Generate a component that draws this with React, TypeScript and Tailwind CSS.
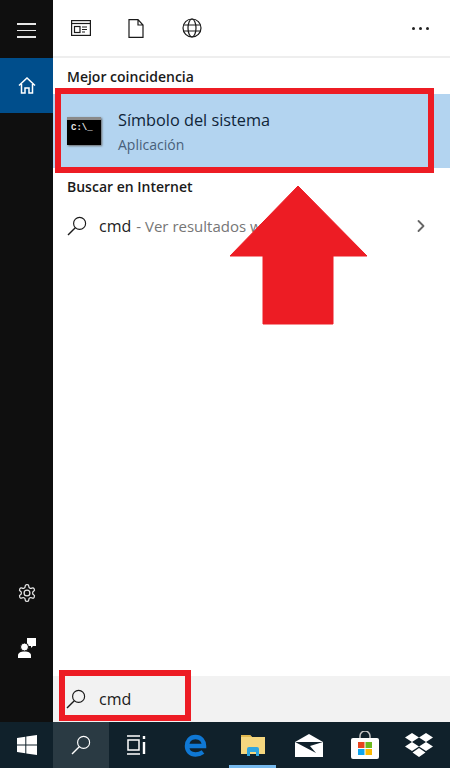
import { ChevronRight } from "lucide-react";

const font = { fontFamily: '"Open Sans", "Noto Sans", sans-serif' };

function SearchIcon({ color = "#1a1a1a", size = 20 }: { color?: string; size?: number }) {
  return (
    <svg width={size} height={size} viewBox="0 0 20 20" fill="none" stroke={color} strokeWidth="1.15">
      <circle cx="12.6" cy="7.4" r="6" />
      <path d="M8.300 11.700 1 19" strokeWidth="1.400" />
    </svg>
  );
}

function Toolbar() {
  return (
    <div className="flex h-[58px] items-center border-b-2 border-[#eeeeee] bg-white">
      <svg className="ml-[18px]" width="20" height="16" viewBox="0 0 20 16" fill="none" stroke="#1a1a1a" strokeWidth="1.2">
        <rect x="0.6" y="0.6" width="18.8" height="14.8" />
        <path d="M1 3.5h18" />
        <rect x="3.5" y="6.5" width="5.5" height="6" />
        <path d="M11 7h5M11 9.5h5M11 12h3" />
      </svg>
      <svg className="ml-[37px]" width="16" height="19" viewBox="0 0 16 19" fill="none" stroke="#1a1a1a" strokeWidth="1.2">
        <path d="M1 .6h9L15 6v12.4H1zM10 .6V6h5" />
      </svg>
      <svg className="ml-[38px]" width="20" height="20" viewBox="0 0 20 20" fill="none" stroke="#1a1a1a" strokeWidth="1.2">
        <circle cx="10" cy="10" r="9" />
        <ellipse cx="10" cy="10" rx="4" ry="9" />
        <path d="M1.5 7h17M1.5 13h17" />
      </svg>
      <div className="ml-auto mr-[21px] flex gap-[4px]">
        <span className="h-[3px] w-[3px] rounded-full bg-[#222222]" />
        <span className="h-[3px] w-[3px] rounded-full bg-[#222222]" />
        <span className="h-[3px] w-[3px] rounded-full bg-[#222222]" />
      </div>
    </div>
  );
}

function Sidebar() {
  return (
    <div className="flex w-[53px] shrink-0 flex-col bg-[#0f0f0f]">
      <div className="flex h-[58px] flex-col items-center justify-center gap-[5px] pt-[3px]">
        <span className="h-[1.5px] w-[19px] bg-[#e6e6e6]" />
        <span className="h-[1.5px] w-[19px] bg-[#e6e6e6]" />
        <span className="h-[1.5px] w-[19px] bg-[#e6e6e6]" />
      </div>
      <div className="flex h-[55px] items-center justify-center bg-[#004e8c]">
        <svg width="18" height="17" viewBox="0 0 18 17" fill="none" stroke="#ffffff" strokeWidth="1.500">
          <path d="M1 8.500 9 1l8 7.500M3.500 7v9h3.500v-5h4v5h3.500V7" />
        </svg>
      </div>
      <div className="mt-auto flex flex-col items-center gap-[35px] pb-[64px]">
        <svg width="20" height="20" viewBox="0 0 24 24" fill="none" stroke="#e6e6e6" strokeWidth="1.500">
          <circle cx="12" cy="12" r="3.5" />
          <path d="M12.2 2h-.4a2 2 0 0 0-2 2v.2a2 2 0 0 1-1 1.7l-.4.3a2 2 0 0 1-2 0l-.2-.1a2 2 0 0 0-2.7.7l-.2.4a2 2 0 0 0 .7 2.7l.2.1a2 2 0 0 1 1 1.7v.5a2 2 0 0 1-1 1.8l-.2.1a2 2 0 0 0-.7 2.7l.2.4a2 2 0 0 0 2.7.7l.2-.1a2 2 0 0 1 2 0l.4.3a2 2 0 0 1 1 1.7v.2a2 2 0 0 0 2 2h.4a2 2 0 0 0 2-2v-.2a2 2 0 0 1 1-1.7l.4-.3a2 2 0 0 1 2 0l.2.1a2 2 0 0 0 2.7-.7l.2-.4a2 2 0 0 0-.7-2.7l-.2-.1a2 2 0 0 1-1-1.8v-.5a2 2 0 0 1 1-1.7l.2-.1a2 2 0 0 0 .7-2.7l-.2-.4a2 2 0 0 0-2.7-.7l-.2.1a2 2 0 0 1-2 0l-.4-.3a2 2 0 0 1-1-1.7V4a2 2 0 0 0-2-2z" />
        </svg>
        <svg width="18" height="20" viewBox="0 0 18 20" fill="#ffffff">
          <path d="M9 0h9v8h-3l-2 2V8H9z" />
          <circle cx="6.5" cy="9" r="4" stroke="#0f0f0f" />
          <path d="M0 20v-2.500C0 15 2.500 13.500 6.500 13.500s6.500 1.500 6.500 4V20z" />
        </svg>
      </div>
    </div>
  );
}

function Panel() {
  return (
    <div className="flex min-w-0 flex-1 flex-col bg-white">
      <Toolbar />
      <div className="pl-[14px] pt-[9px] text-[14px] font-semibold leading-[20px] text-[#1a1a1a]">Mejor coincidencia</div>
      <div className="mt-[7px] flex h-[74px] items-center bg-[#b3d4f0]">
        <div className="ml-[14px] h-[28px] w-[34px] border-t-[3px] border-[#8a8a8a] bg-black pl-[4px] pt-[3px] font-mono text-[9px] font-bold leading-[11px] text-[#e6e6e6] shadow-[1px_1px_2px_#666666]">
          C:\_
        </div>
        <div className="ml-[17px]">
          <div className="text-[16.3px] leading-[24px] text-[#0f2438]">Símbolo del sistema</div>
          <div className="mt-[3px] text-[14px] leading-[20px] text-[#48607a]">Aplicación</div>
        </div>
      </div>
      <div className="pl-[14px] pt-[9px] text-[14px] font-semibold leading-[20px] text-[#1a1a1a]">Buscar en Internet</div>
      <div className="mt-[11px] flex h-[36px] items-center pl-[14px] pr-[19px]">
        <SearchIcon />
        <span className="ml-[12px] text-[16px] text-[#222222]">cmd</span>
        <span className="ml-[5px] text-[15px] text-[#767676]">- Ver resultados web</span>
        <ChevronRight className="ml-auto" size={20} color="#666666" strokeWidth={2.200} />
      </div>
      <div className="mt-auto flex h-[46px] items-center bg-[#f2f2f2] pl-[13px]">
        <SearchIcon />
        <span className="ml-[13px] text-[16px] text-[#1a1a1a]">cmd</span>
      </div>
    </div>
  );
}

function Taskbar() {
  return (
    <div className="flex h-[46px] shrink-0 items-center bg-[#10212b]">
      <div className="flex h-full w-[53px] items-center justify-center">
        <svg width="20" height="20" viewBox="0 0 20 20" fill="#ffffff">
          <path d="M0 3l8.300-1.200V9.500H0zM9.300 1.600L20 0v9.500H9.300zM0 10.500h8.300v7.700L0 17zM9.300 10.500H20V20L9.300 18.400z" />
        </svg>
      </div>
      <div className="flex h-full w-[56px] items-center justify-center bg-[#2a3a43]">
        <SearchIcon color="#ffffff" />
      </div>
      <div className="flex h-full w-[54px] items-center justify-center">
        <svg width="20" height="20" viewBox="0 0 20 20" fill="none" stroke="#ffffff" strokeWidth="1.500">
          <path d="M1 1h13M1 19h13" />
          <rect x="2" y="5" width="11" height="10" />
          <path d="M18 1v3M18 7v12" strokeWidth="2.400" />
        </svg>
      </div>
      <div className="flex h-full w-[66px] items-center justify-center">
        <svg width="24" height="24" viewBox="0 0 24 24" fill="none" stroke="#0f78d4" strokeWidth="4.500">
          <path d="M3 13h17c0-5-3-9-8.500-9C6 4 3 8 3 13c0 5 3.500 8.500 8.500 8.500 3 0 5.500-1 7.500-2.500" />
        </svg>
      </div>
      <div className="relative flex h-full w-[47px] items-center justify-center">
        <svg width="26" height="22" viewBox="0 0 26 22">
          <path d="M1 1h9l2 2h13v17H1z" fill="#f5d77f" />
          <path d="M1 1h9l2 2H1z" fill="#e0b84f" />
          <path d="M7 22v-7a2 2 0 0 1 2-2h8a2 2 0 0 1 2 2v7h-3v-4h-6v4z" fill="#2fa6e0" />
        </svg>
        <span className="absolute bottom-0 left-0 h-[3px] w-full bg-[#76b9ed]" />
      </div>
      <div className="flex h-full w-[65px] items-center justify-center">
        <svg width="28" height="23" viewBox="0 0 28 23">
          <path d="M0 8 14 0l14 8v15H0z" fill="#ffffff" />
          <path d="M0 8h28L15 12l6 7L2 9z" fill="#10212b" />
        </svg>
      </div>
      <div className="flex h-full w-[47px] items-center justify-center">
        <svg width="28" height="28" viewBox="0 0 28 28">
          <path d="M9 8V5a5 5 0 0 1 10 0v3" fill="none" stroke="#c4c4c4" strokeWidth="1.500" />
          <rect y="7" width="28" height="21" rx="2" fill="#ffffff" />
          <rect x="7" y="11" width="6.500" height="6" fill="#e8431f" />
          <rect x="14.500" y="11" width="6.500" height="6" fill="#6cb81f" />
          <rect x="7" y="18" width="6.500" height="6" fill="#0ea5ee" />
          <rect x="14.500" y="18" width="6.500" height="6" fill="#fdb900" />
        </svg>
      </div>
      <div className="flex h-full flex-1 items-center justify-center">
        <svg width="28" height="24" viewBox="0 0 28 24" fill="#ffffff">
          <path d="M7 0l7 4.500L7 9 0 4.500zM21 0l7 4.500L21 9l-7-4.500zM7 9l7 4.500L7 18l-7-4.500zM21 9l7 4.500L21 18l-7-4.500zM14 15l6.500 4.500L14 24l-6.500-4.500z" />
        </svg>
      </div>
    </div>
  );
}

export default function App() {
  return (
    <div className="relative flex h-[768px] w-[450px] flex-col overflow-hidden" style={font}>
      <div className="flex min-h-0 flex-1">
        <Sidebar />
        <Panel />
      </div>
      <Taskbar />

      {/* resaltados rojos encima de la captura */}
      <div className="absolute left-[55px] top-[88px] h-[85px] w-[379px] border-[6px] border-[#ed1c24]" />
      <div className="absolute left-[59px] top-[670px] h-[51px] w-[132px] border-[6px] border-[#ed1c24]" />
      <svg className="absolute left-[229px] top-[185px]" width="140" height="140" viewBox="0 0 140 140" fill="#ed1c24">
        <path d="M69 1 138 71H104V139H34V71H1z" stroke="#ed1c24" strokeLinejoin="round" />
      </svg>
    </div>
  );
}
